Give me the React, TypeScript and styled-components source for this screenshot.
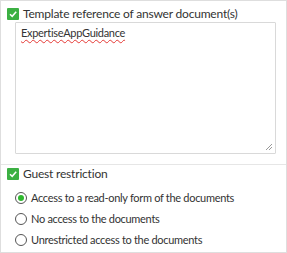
import * as React from 'react';
import styled, { createGlobalStyle } from 'styled-components';

const GlobalStyle = createGlobalStyle`
  html, body {
    margin: 0;
    padding: 0;
    background: #ffffff;
  }
  body {
    font-family: Lato, "Open Sans", sans-serif;
    color: #333333;
  }
`;

const Panel = styled.div`
  width: 287px;
  height: 253px;
  box-sizing: border-box;
  border: 1px solid #dedede;
  display: flex;
  flex-direction: column;
`;

const Section = styled.div<{ $last?: boolean }>`
  padding: ${({ $last }) => ($last ? '2px 10px 10px 6px' : '6px 10px 10px 6px')};
  border-bottom: ${({ $last }) => ($last ? 'none' : '1px solid #e6e6e6')};
`;

const CheckRow = styled.label`
  display: flex;
  align-items: center;
  gap: 4px;
  font-size: 12px;
  letter-spacing: -0.2px;
  line-height: 13px;
  height: 13px;
`;

const Box = styled.span`
  width: 12px;
  height: 12px;
  background: #3cb043;
  border-radius: 1px;
  display: flex;
  align-items: center;
  justify-content: center;
  flex-shrink: 0;
`;

const TextBox = styled.div`
  margin: 2px 0 0 8px;
  height: 132px;
  box-sizing: border-box;
  border: 1px solid #d9d9d9;
  border-radius: 1px;
  padding: 2px 5px;
  font-size: 11px;
  letter-spacing: -0.3px;
  line-height: 16px;
  position: relative;
`;

const Misspelled = styled.span`
  text-decoration: underline wavy #e53935;
  text-decoration-thickness: 1px;
  text-underline-offset: 2px;
`;

const Grip = styled.svg`
  position: absolute;
  right: 2px;
  bottom: 2px;
`;

const RadioList = styled.div`
  display: flex;
  flex-direction: column;
  gap: 7px;
  margin: 11px 0 0 8px;
`;

const RadioRow = styled.label`
  display: flex;
  align-items: center;
  gap: 4px;
  font-size: 11px;
  letter-spacing: -0.3px;
  line-height: 14px;
  height: 14px;
`;

const Circle = styled.span<{ $on?: boolean }>`
  width: 12px;
  height: 12px;
  box-sizing: border-box;
  border: 1px solid #555555;
  border-radius: 50%;
  display: flex;
  align-items: center;
  justify-content: center;
  flex-shrink: 0;

  &:after {
    content: '';
    width: 6px;
    height: 6px;
    border-radius: 50%;
    background: ${({ $on }) => ($on ? '#2eb82e' : 'transparent')};
  }
`;

const Check = () => (
  <Box>
    <svg width="10" height="10" viewBox="0 0 10 10">
      <path d="M2 5.2 L4.2 7.3 L8.2 2.8" fill="none" stroke="#fff" strokeWidth="1.5" />
    </svg>
  </Box>
);

const options = [
  'Access to a read-only form of the documents',
  'No access to the documents',
  'Unrestricted access to the documents',
];

export default function App() {
  return (
    <>
      <GlobalStyle />
      <Panel>
        <Section>
          <CheckRow>
            <Check />
            Template reference of answer document(s)
          </CheckRow>
          <TextBox>
            <Misspelled>ExpertiseAppGuidance</Misspelled>
            <Grip width="8" height="8" viewBox="0 0 8 8">
              <path d="M7 1 L1 7 M7 4 L4 7" stroke="#999" strokeWidth="1" />
            </Grip>
          </TextBox>
        </Section>
        <Section $last>
          <CheckRow>
            <Check />
            Guest restriction
          </CheckRow>
          <RadioList>
            {options.map((o, i) => (
              <RadioRow key={o}>
                <Circle $on={i === 0} />
                {o}
              </RadioRow>
            ))}
          </RadioList>
        </Section>
      </Panel>
    </>
  );
}
